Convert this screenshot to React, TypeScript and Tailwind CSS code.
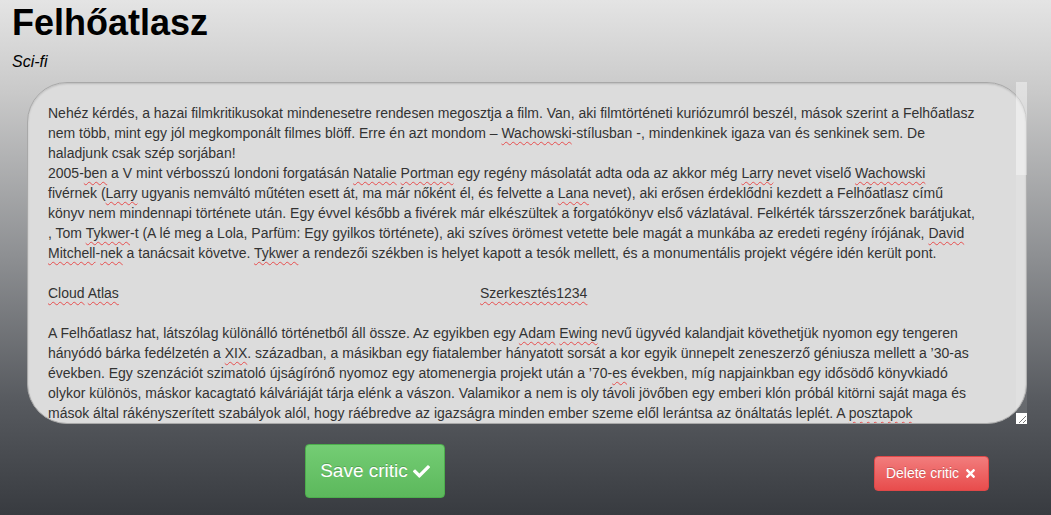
import { FaCheck, FaTimes } from "react-icons/fa";

// Review text, one entry per visual line; words in [brackets] carry the spell-check squiggle
const lines: string[] = [
    "Nehéz kérdés, a hazai filmkritikusokat mindenesetre rendesen megosztja a film. Van, aki filmtörténeti kuriózumról beszél, mások szerint a Felhőatlasz",
    "nem több, mint egy jól megkomponált filmes blöff. Erre én azt mondom – [Wachowski]-stílusban -, mindenkinek igaza van és senkinek sem. De",
    "haladjunk csak szép sorjában!",
    "2005-[ben] a V mint vérbosszú londoni forgatásán [Natalie] [Portman] egy regény másolatát adta oda az akkor még [Larry] nevet viselő [Wachowski]",
    "fivérnek ([Larry] ugyanis nemváltó műtéten esett át, ma már nőként él, és felvette a [Lana] nevet), aki erősen érdeklődni kezdett a Felhőatlasz című",
    "könyv nem mindennapi története után. Egy évvel később a fivérek már elkészültek a forgatókönyv első vázlatával. Felkérték társszerzőnek barátjukat,",
    ", Tom [Tykwer]-t (A lé meg a Lola, Parfüm: Egy gyilkos története), aki szíves örömest vetette bele magát a munkába az eredeti regény írójának, [David]",
    "[Mitchell]-[nek] a tanácsait követve. [Tykwer] a rendezői székben is helyet kapott a tesók mellett, és a monumentális projekt végére idén került pont.",
];

const lines2: string[] = [
    "A Felhőatlasz hat, látszólag különálló történetből áll össze. Az egyikben egy [Adam] [Ewing] nevű ügyvéd kalandjait követhetjük nyomon egy tengeren",
    "hányódó bárka fedélzetén a [XIX]. században, a másikban egy fiatalember hányatott sorsát a kor egyik ünnepelt zeneszerző géniusza mellett a ’30-as",
    "években. Egy szenzációt szimatoló újságírónő nyomoz egy atomenergia projekt után a ’70-[es] években, míg napjainkban egy idősödő könyvkiadó",
    "olykor különös, máskor kacagtató kálváriáját tárja elénk a vászon. Valamikor a nem is oly távoli jövőben egy emberi klón próbál kitörni saját maga és",
    "mások által rákényszerített szabályok alól, hogy ráébredve az igazságra minden ember szeme elől lerántsa az önáltatás leplét. A [posztapok]",
];

function Squiggle({ children }: { children: string }) {
    return (
        <span className="underline decoration-wavy decoration-[#e83030]/80 decoration-1 underline-offset-[3px]">
            {children}
        </span>
    );
}

function Line({ text }: { text: string }) {
    const parts = text.split(/(\[[^\]]+\])/);
    return (
        <div className="h-5 whitespace-pre">
            {parts.map((p, i) =>
                p.startsWith("[") ? <Squiggle key={i}>{p.slice(1, -1)}</Squiggle> : <span key={i}>{p}</span>
            )}
        </div>
    );
}

export default function App() {
    return (
        <div className="w-[1051px] h-[515px] overflow-hidden bg-[linear-gradient(180deg,#e4e4e4_0%,#c9c9c9_18%,#8d8f92_50%,#575a5f_78%,#383b40_100%)] font-['Liberation_Sans',Arial,sans-serif]">
            <h1 className="pl-3 pt-[2px] text-[36px] leading-[42px] font-bold text-black">Felhőatlasz</h1>
            <div className="pl-3 mt-[8px] text-[16px] leading-5 italic text-black">Sci-fi</div>

            <div className="relative ml-[27px] mt-[10px] w-[1000px] h-[342px]">
                <div className="h-full w-full overflow-hidden rounded-[40px] border border-[#a8a8a8] bg-[#dcdcdc] pl-5 pr-4 pt-5 text-[14px] leading-5 text-[#333] shadow-[inset_0_1px_2px_rgba(0,0,0,0.15)]">
                    {lines.map((l, i) => (
                        <Line key={i} text={l} />
                    ))}
                    <div className="h-5" />
                    <div className="h-5 whitespace-pre">
                        <span className="inline-block w-[432px]">
                            <Squiggle>Cloud</Squiggle> <Squiggle>Atlas</Squiggle>
                        </span>
                        <Squiggle>Szerkesztés1234</Squiggle>
                    </div>
                    <div className="h-5" />
                    {lines2.map((l, i) => (
                        <Line key={i} text={l} />
                    ))}
                </div>
                {/* scrollbar */}
                <div className="absolute right-0 top-0 bottom-[11px] w-[11px] bg-white/10">
                    <div className="h-[93px] w-full bg-white/35" />
                </div>
                {/* resize grip */}
                <div className="absolute right-0 bottom-0 w-[11px] h-[11px] bg-white">
                    <svg width="11" height="11" viewBox="0 0 11 11">
                        <path d="M10 3 L3 10 M10 7 L7 10" stroke="#777" strokeWidth="1" />
                    </svg>
                </div>
            </div>

            <div className="flex items-start mt-[20px]">
                <button className="ml-[305px] flex items-center gap-[5px] h-[54px] w-[140px] justify-center rounded-[4px] border border-[#4cae4c] bg-[linear-gradient(180deg,#74cd74,#5cb85c)] text-[19px] text-white [text-shadow:0_-1px_0_rgba(0,0,0,0.2)]">
                    Save critic <FaCheck className="text-[17px]" />
                </button>
                <button className="ml-auto mr-[62px] mt-[12px] flex items-center gap-[5px] h-[35px] w-[115px] justify-center rounded-[4px] border border-[#e04848] bg-[linear-gradient(180deg,#f27d7d,#e84c4c)] text-[14px] text-white [text-shadow:0_-1px_0_rgba(0,0,0,0.2)]">
                    Delete critic <FaTimes className="text-[13px]" />
                </button>
            </div>
        </div>
    );
}
